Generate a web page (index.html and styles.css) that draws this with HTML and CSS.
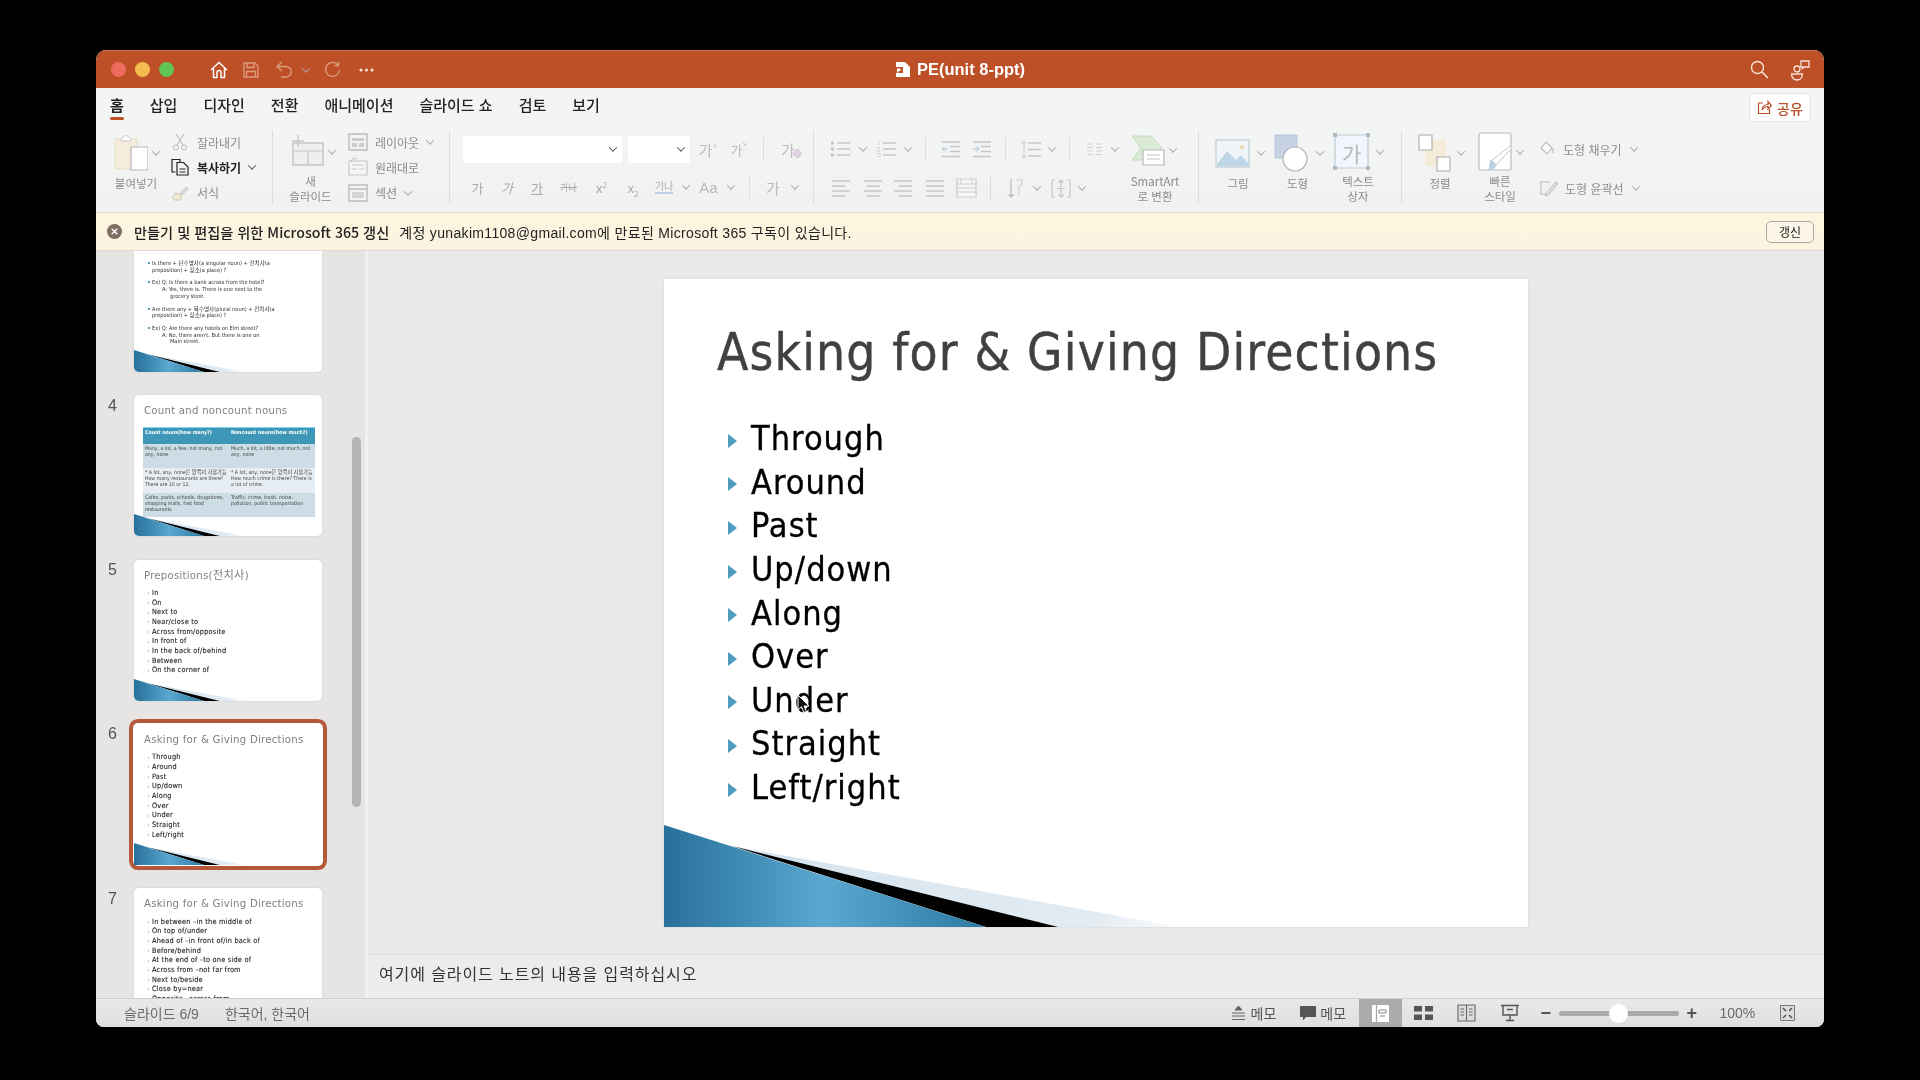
FILE: index.html
```html
<!DOCTYPE html>
<html lang="ko">
<head>
<meta charset="utf-8">
<title>PE(unit 8-ppt)</title>
<link rel="stylesheet" href="styles.css">
</head>
<body>
<div class="window">
  <header class="titlebar">
    <div class="tb-left">
      <span class="light red"></span><span class="light yellow"></span><span class="light green"></span>
      <svg class="qa home" width="20" height="20" viewBox="0 0 20 20"><path d="M2 10 10 2.500 18 10M4.500 8.500V17.500H8V12.500A2 2 0 0 1 12 12.500V17.500H15.500V8.500" fill="none" stroke="#fff" stroke-width="1.500" stroke-linejoin="round"/></svg>
      <svg class="qa save" width="18" height="18" viewBox="0 0 18 18"><path d="M2 2H13L16 5V16H2ZM5 2V6.500H12V2M4.500 16V10.500H13.500V16" fill="none" stroke="#dd9c80" stroke-width="1.300"/></svg>
      <svg class="qa undo" width="20" height="20" viewBox="0 0 20 20"><path d="M8 2 3 6.500 8 11M3 6.500H12A5 5 0 0 1 12 17H7" fill="none" stroke="#dd9c80" stroke-width="1.400"/></svg>
      <i class="chv chv-tb"></i>
      <svg class="qa redo" width="19" height="19" viewBox="0 0 19 19"><path d="M15 5A7 7 0 1 0 16.500 10M15.500 1.500V5.500H11.500" fill="none" stroke="#dd9c80" stroke-width="1.300"/></svg>
      <svg class="more" width="15" height="4" viewBox="0 0 15 4"><circle cx="2" cy="2" r="1.600" fill="#f6e3da"/><circle cx="7.500" cy="2" r="1.600" fill="#f6e3da"/><circle cx="13" cy="2" r="1.600" fill="#f6e3da"/></svg>
    </div>
    <div class="tb-title">
      <svg width="16" height="17" viewBox="0 0 16 17"><path d="M1 1H10L15 6V16H1Z" fill="#fff"/><path d="M0 6H8V12H0Z" fill="#bd5026"/><path d="M2 7.500H5.500V10H3.500V11.500H2Z" fill="#fff"/></svg>
      <span>PE(unit 8-ppt)</span>
    </div>
    <div class="tb-right">
      <svg width="19" height="19" viewBox="0 0 19 19"><circle cx="7.500" cy="7.500" r="6" fill="none" stroke="#f6e3da" stroke-width="1.400"/><path d="M12 12 18 18" stroke="#f6e3da" stroke-width="1.500"/></svg>
      <svg width="21" height="22" viewBox="0 0 21 22"><circle cx="7" cy="10" r="3" fill="none" stroke="#f6e3da" stroke-width="1.300"/><path d="M1.500 15H12.500C12.500 23 1.500 23 1.500 15Z" fill="none" stroke="#f6e3da" stroke-width="1.300"/><path d="M11 2H19V8H14L12.500 9.500V8H11Z" fill="none" stroke="#f6e3da" stroke-width="1.300"/></svg>
    </div>
  </header>

  <nav class="tabs">
    <ul class="tablist">
      <li class="tab active">홈</li><li class="tab">삽입</li><li class="tab">디자인</li><li class="tab">전환</li><li class="tab">애니메이션</li><li class="tab">슬라이드 쇼</li><li class="tab">검토</li><li class="tab">보기</li>
    </ul>
    <button class="share">
      <svg width="15" height="15" viewBox="0 0 15 15"><path d="M6 3H1.500V13.500H12.500V9M5 10C5.500 6 8 4.500 11 4.500V1.500L14.500 5.500 11 9V6.500C8.500 6.500 6.500 7.500 5 10Z" fill="none" stroke="#b9502a" stroke-width="1.200"/></svg>
      <span>공유</span>
    </button>
  </nav>

  <section class="ribbon">
    <div class="grp g-clip">
      <div class="big b-paste">
        <div class="big-ic">
          <svg width="34" height="38" viewBox="0 0 34 38"><path d="M1 5H23V35H1Z" fill="#f3edda" stroke="#e6dfc6"/><path d="M7 5 12 1 17 5V7H7Z" fill="#fff" stroke="#c9c9c9"/><path d="M17 13H34V36H17Z" fill="#fff" stroke="#b7b7b7" stroke-width="1.200"/></svg>
          <i class="chv"></i>
        </div>
        <span class="lbl">붙여넣기</span>
      </div>
      <div class="small">
        <div class="sm-row"><svg width="16" height="18" viewBox="0 0 16 18"><path d="M4 1 11 12M12 1 5 12" stroke="#bbb" stroke-width="1.100"/><circle cx="4" cy="14.500" r="2.500" fill="none" stroke="#bbb"/><circle cx="12" cy="14.500" r="2.500" fill="none" stroke="#bbb"/></svg><span>잘라내기</span></div>
        <div class="sm-row on"><svg width="19" height="18" viewBox="0 0 19 18"><path d="M5 14H1.500V1.500H9.500V4" fill="none" stroke="#222" stroke-width="1.200"/><path d="M6.500 4.500H13L17.500 9V17H6.500Z" fill="none" stroke="#222" stroke-width="1.200"/><path d="M9 11H15M9 14H15" stroke="#222"/></svg><span>복사하기</span><i class="chv dark"></i></div>
        <div class="sm-row"><svg width="18" height="16" viewBox="0 0 18 16"><path d="M9 9 15 2 17 4 10.500 10.500Z" fill="#ddd" stroke="#c4c4c4"/><path d="M4 8 9 9 10.500 10.500 10 15 3 15 1 12C3 12 4 10 4 8Z" fill="#f0ead2" stroke="#cbc8ba"/></svg><span>서식</span></div>
      </div>
    </div>

    <div class="grp g-slide">
      <div class="big b-new">
        <div class="big-ic">
          <svg width="36" height="38" viewBox="0 0 36 38"><path d="M3 10H33V32H3Z" fill="#efefef" stroke="#c6c6c6" stroke-width="1.500"/><path d="M3 18H33M18 18V32" stroke="#c6c6c6" stroke-width="1.200"/><path d="M8 2V14M2 8H14" stroke="#c9c9c9" stroke-width="1.400"/></svg>
          <i class="chv"></i>
        </div>
        <span class="lbl">새<br>슬라이드</span>
      </div>
      <div class="small">
        <div class="sm-row"><svg width="20" height="18" viewBox="0 0 20 18"><path d="M1 1H19V17H1Z" fill="#f2f2f2" stroke="#bcbcbc" stroke-width="1.400"/><path d="M4 5H16V8H4ZM4 10H9V14H4ZM11 10H16V14H11Z" fill="#ccc"/></svg><span>레이아웃</span><i class="chv"></i></div>
        <div class="sm-row"><svg width="20" height="18" viewBox="0 0 20 18"><path d="M1 3H19V17H1Z" fill="#f5f5f5" stroke="#c6c6c6" stroke-width="1.200"/><path d="M4 7H16M4 11H9M11 11H16" stroke="#c6c6c6"/><path d="M3 4A4 4 0 0 1 9 1" fill="none" stroke="#bbb"/></svg><span>원래대로</span></div>
        <div class="sm-row"><svg width="20" height="18" viewBox="0 0 20 18"><path d="M1 1H19V17H1Z" fill="#f4f4f4" stroke="#bcbcbc" stroke-width="1.400"/><path d="M1 5H19" stroke="#bcbcbc" stroke-width="1.400"/><path d="M4 8H16V14H4Z" fill="#d6d6d6"/></svg><span>섹션</span><i class="chv"></i></div>
      </div>
    </div>

    <div class="grp g-font">
      <div class="fr1">
        <div class="box b-fontname"><i class="chv dark"></i></div>
        <div class="box b-fontsize"><i class="chv dark"></i></div>
        <span class="gl big-g">가<sup>^</sup></span>
        <span class="gl mid-g">가<sup>ˇ</sup></span>
        <b class="vd"></b>
        <span class="gl big-g erase">가<svg width="9" height="9" viewBox="0 0 9 9"><path d="M4.500 0 9 4.500 4.500 9 0 4.500Z" fill="#e3d3e6" stroke="#c9b8cc"/></svg></span>
      </div>
      <div class="fr2">
        <span class="gl">가</span><span class="gl it">가</span><span class="gl ul">가</span><span class="gl st">가나</span><span class="gl">x<sup>2</sup></span><span class="gl">x<sub>2</sub></span><span class="gl sp">기나</span><i class="chv"></i><span class="gl aa">Aa</span><i class="chv"></i><b class="vd"></b><span class="gl big-g">가</span><i class="chv"></i>
      </div>
    </div>

    <div class="grp g-para">
      <div class="para-cols">
        <div class="pr1">
          <svg class="ic" width="19" height="18" viewBox="0 0 19 18"><path d="M6 3H19M6 9H19M6 15H19" stroke="#c6c6c6" stroke-width="1.400"/><path d="M0 1.500H3V4.500H0ZM0 7.500H3V10.500H0ZM0 13.500H3V16.500H0Z" fill="#c6c6c6"/></svg><i class="chv"></i>
          <svg class="ic" width="19" height="18" viewBox="0 0 19 18"><path d="M6 3H19M6 9H19M6 15H19" stroke="#c6c6c6" stroke-width="1.400"/><path d="M1 1.500 2 1V5M0 7.500H3L0 11H3M0 13.500H3V17H0" fill="none" stroke="#cfcfcf" stroke-width=".8"/></svg><i class="chv"></i>
          <b class="vd"></b>
          <svg class="ic" width="18" height="17" viewBox="0 0 18 17"><path d="M0 1H18M8 5.500H18M8 10.500H18M0 15.500H18" stroke="#c6c6c6" stroke-width="1.300"/><path d="M6 8H0M3 5.500 .5 8 3 10.500" fill="none" stroke="#a9bfd3"/></svg>
          <svg class="ic" width="18" height="17" viewBox="0 0 18 17"><path d="M0 1H18M8 5.500H18M8 10.500H18M0 15.500H18" stroke="#c6c6c6" stroke-width="1.300"/><path d="M0 8H6M3.500 5.500 6 8 3.500 10.500" fill="none" stroke="#a9bfd3"/></svg>
          <b class="vd"></b>
          <svg class="ic" width="20" height="19" viewBox="0 0 20 19"><path d="M7 3H20M7 9.500H20M7 16H20" stroke="#c6c6c6" stroke-width="1.400"/><path d="M3 1V18M.5 3.500 3 1 5.500 3.500M.5 15.500 3 18 5.500 15.500" fill="none" stroke="#c0c8d0"/></svg><i class="chv"></i>
          <b class="vd"></b>
          <svg class="ic" width="15" height="12" viewBox="0 0 15 12"><path d="M0 1H6M0 4.500H6M0 8H6M0 11.500H6M9 1H15M9 4.500H15M9 8H15M9 11.500H15" stroke="#d2d2d2" stroke-width="1.100"/></svg><i class="chv"></i>
        </div>
        <div class="pr2">
          <svg class="ic" width="18" height="17" viewBox="0 0 18 17"><path d="M0 1H18M0 6H13M0 11H18M0 16H13" stroke="#c6c6c6" stroke-width="1.300"/></svg>
          <svg class="ic" width="18" height="17" viewBox="0 0 18 17"><path d="M0 1H18M2.500 6H15.500M0 11H18M2.500 16H15.500" stroke="#c6c6c6" stroke-width="1.300"/></svg>
          <svg class="ic" width="18" height="17" viewBox="0 0 18 17"><path d="M0 1H18M5 6H18M0 11H18M5 16H18" stroke="#c6c6c6" stroke-width="1.300"/></svg>
          <svg class="ic" width="18" height="17" viewBox="0 0 18 17"><path d="M0 1H18M0 6H18M0 11H18M0 16H18" stroke="#c6c6c6" stroke-width="1.300"/></svg>
          <svg class="ic" width="21" height="20" viewBox="0 0 21 20"><path d="M1 1H20V19H1ZM1 6H20M1 10H20M1 14H20" fill="#f6f6f6" stroke="#cbcbcb" stroke-width="1.200"/><path d="M5 1V6M16 1V6" stroke="#cbcbcb"/></svg>
          <b class="vd"></b>
          <span class="gl td"><svg width="16" height="20" viewBox="0 0 16 20"><path d="M3 1V19M.5 16.500 3 19 5.500 16.500" fill="none" stroke="#b5b5b5" stroke-width="1.100"/><path d="M8 2H14V6L10 10M11 11V18" fill="none" stroke="#cfcfcf" stroke-width="1.100"/></svg></span><i class="chv"></i>
          <svg class="ic" width="20" height="19" viewBox="0 0 20 19"><path d="M4 1H1V18H4M16 1H19V18H16M10 1V18M7.500 3.500 10 1 12.500 3.500M7.500 15.500 10 18 12.500 15.500M6 9.500H14" fill="none" stroke="#c4c4c4" stroke-width="1.100"/></svg><i class="chv"></i>
        </div>
      </div>
      <div class="big b-smart">
        <div class="big-ic">
          <svg width="34" height="31" viewBox="0 0 34 31"><path d="M1 1H20L31 13 20 25H1L10 13Z" fill="#dcebd8" stroke="#c3dac0"/><path d="M12 15H33V30H12Z" fill="#fff" stroke="#b9b9b9" stroke-width="1.200"/><path d="M16 20H29M16 24H29" stroke="#c0c0c0"/></svg>
          <i class="chv"></i>
        </div>
        <span class="lbl">SmartArt<br>로 변환</span>
      </div>
    </div>

    <div class="grp g-insert">
      <div class="big b-pic">
        <div class="big-ic">
          <svg width="35" height="29" viewBox="0 0 35 29"><path d="M1 1H34V28H1Z" fill="#eef4f8" stroke="#c8d4dc" stroke-width="1.500"/><path d="M2 25 12 12 21 21 26 16 33 24V27H2Z" fill="#bfd6e6"/><circle cx="27" cy="8" r="2" fill="#ecd9a8"/></svg>
          <i class="chv"></i>
        </div>
        <span class="lbl">그림</span>
      </div>
      <div class="big b-shape">
        <div class="big-ic">
          <svg width="34" height="38" viewBox="0 0 34 38"><path d="M1 1H23V24H1Z" fill="#c7d2e5" stroke="#bac7dc"/><circle cx="21" cy="25" r="12" fill="#fff" stroke="#b4b4b4" stroke-width="1.200"/></svg>
          <i class="chv"></i>
        </div>
        <span class="lbl">도형</span>
      </div>
      <div class="big b-tbox">
        <div class="big-ic">
          <svg class="tbox-ic" width="37" height="37" viewBox="0 0 37 37"><path d="M2 2H35V35H2Z" fill="#f0f6fb" stroke="#bfcbd3" stroke-width="1.200"/><path d="M0 0H4V4H0ZM33 0H37V4H33ZM0 33H4V37H0ZM33 33H37V37H33Z" fill="#adbcc7"/></svg><span class="tbox-t">가</span>
          <i class="chv"></i>
        </div>
        <span class="lbl">텍스트<br>상자</span>
      </div>
    </div>

    <div class="grp g-draw">
      <div class="big b-arr">
        <div class="big-ic">
          <svg width="33" height="38" viewBox="0 0 33 38"><path d="M7 6H28V32H7Z" fill="#f4ecd8"/><path d="M1 1H14V16H1Z" fill="#fff" stroke="#aaa" stroke-width="1.100"/><path d="M19 23H32V37H19Z" fill="#fff" stroke="#aaa" stroke-width="1.100"/></svg>
          <i class="chv"></i>
        </div>
        <span class="lbl">정렬</span>
      </div>
      <div class="big b-qs">
        <div class="big-ic">
          <svg width="34" height="39" viewBox="0 0 34 39"><path d="M3 1H31A2 2 0 0 1 33 3V36A2 2 0 0 1 31 38H3A2 2 0 0 1 1 36V3A2 2 0 0 1 3 1Z" fill="#fff" stroke="#bababa" stroke-width="1.200"/><path d="M13 29 32 14 34 16 18 33Z" fill="#fff" stroke="#c6c6c6"/><path d="M12 28C17 29 19 32 17 36 14 38 11 38 10 38 12 35 11 32 12 28Z" fill="#bcd0e2"/></svg>
          <i class="chv"></i>
        </div>
        <span class="lbl">빠른<br>스타일</span>
      </div>
      <div class="shape-opts">
        <div class="sm-row"><svg width="16" height="16" viewBox="0 0 16 16"><path d="M6 1 12 7 7 13 1 7Z" fill="#fbfbfb" stroke="#bbb" stroke-width="1.100"/><path d="M13 7V12" stroke="#c6c6c6" stroke-width="1.400"/></svg><span>도형 채우기</span><i class="chv"></i></div>
        <div class="sm-row"><svg width="18" height="16" viewBox="0 0 18 16"><path d="M10 2H1V14H6M6 14 16 2 17.500 3.500 8 15 5.500 15.500Z" fill="none" stroke="#bbb" stroke-width="1.100"/></svg><span>도형 윤곽선</span><i class="chv"></i></div>
      </div>
    </div>
  </section>

  <div class="notice">
    <svg width="15" height="15" viewBox="0 0 15 15"><circle cx="7.500" cy="7.500" r="7.500" fill="#7d6e60"/><path d="M4.700 4.700 10.300 10.300M10.300 4.700 4.700 10.300" stroke="#fff" stroke-width="1.500"/></svg>
    <strong>만들기 및 편집을 위한 Microsoft 365 갱신</strong>
    <span class="n-msg">계정 yunakim1108@gmail.com에 만료된 Microsoft 365 구독이 있습니다.</span>
    <button class="renew">갱신</button>
  </div>

  <div class="content">
    <aside class="sidebar">
      <ol class="thumbs">
        <li class="t-item"><span class="t-num"></span>
          <div class="thumb t3">
            <ul class="t-small">
              <li>Is there + 단수명사(a singular noun) + 전치사(a<br>preposition) + 장소(a place) ?</li>
              <li>Ex) Q: Is there a bank across from the hotel?<br><span class="ind">A: Yes, there is. There is one next to the<br><span class="ind2">grocery store.</span></span></li>
              <li>Are there any + 복수명사(plural noun) + 전치사(a<br>preposition) + 장소(a place) ?</li>
              <li>Ex) Q: Are there any hotels on Elm street?<br><span class="ind">A: No, there aren't. But there is one on<br><span class="ind2">Main street.</span></span></li>
            </ul>
            <svg class="wedge" viewBox="0 0 864 102" preserveAspectRatio="none"><use href="#wedge-art"/></svg>
          </div>
        </li>
        <li class="t-item"><span class="t-num">4</span>
          <div class="thumb">
            <h4 class="t-title">Count and noncount nouns</h4>
            <table class="t-table">
              <tr class="th"><td>Count nouns(how many?)</td><td>Noncount nouns(how much?)</td></tr>
              <tr class="r1"><td>Many, a lot, a few, not many, not any, none</td><td>Much, a lot, a little, not much, not any, none</td></tr>
              <tr class="r2"><td>* A lot, any, none은 양쪽이 사용가능<br>How many restaurants are there? There are 10 or 12.</td><td>* A lot, any, none은 양쪽이 사용가능<br>How much crime is there? There is a lot of crime.</td></tr>
              <tr class="r1"><td>Cafes, parks, schools, drugstores, shopping malls, fast food restaurants</td><td>Traffic, crime, trash, noise, pollution, public transportation</td></tr>
            </table>
            <svg class="wedge" viewBox="0 0 864 102" preserveAspectRatio="none"><use href="#wedge-art"/></svg>
          </div>
        </li>
        <li class="t-item"><span class="t-num">5</span>
          <div class="thumb">
            <h4 class="t-title">Prepositions(전치사)</h4>
            <ul class="bul t-list"><li>In</li><li>On</li><li>Next to</li><li>Near/close to</li><li>Across from/opposite</li><li>In front of</li><li>In the back of/behind</li><li>Between</li><li>On the corner of</li></ul>
            <svg class="wedge" viewBox="0 0 864 102" preserveAspectRatio="none"><use href="#wedge-art"/></svg>
          </div>
        </li>
        <li class="t-item"><span class="t-num">6</span>
          <div class="thumb sel">
            <h4 class="t-title">Asking for &amp; Giving Directions</h4>
            <ul class="bul t-list"><li>Through</li><li>Around</li><li>Past</li><li>Up/down</li><li>Along</li><li>Over</li><li>Under</li><li>Straight</li><li>Left/right</li></ul>
            <svg class="wedge" viewBox="0 0 864 102" preserveAspectRatio="none"><use href="#wedge-art"/></svg>
          </div>
        </li>
        <li class="t-item"><span class="t-num">7</span>
          <div class="thumb">
            <h4 class="t-title">Asking for &amp; Giving Directions</h4>
            <ul class="bul t-list"><li>In between –in the middle of</li><li>On top of/under</li><li>Ahead of –in front of/in back of</li><li>Before/behind</li><li>At the end of –to one side of</li><li>Across from –not far from</li><li>Next to/beside</li><li>Close by=near</li><li>Opposite –across from</li></ul>
          </div>
        </li>
      </ol>
      <div class="scrollthumb"></div>
    </aside>

    <main class="main">
      <div class="stage">
        <article class="slide">
          <h1 class="s-title">Asking for &amp; Giving Directions</h1>
          <ul class="bul s-list"><li>Through</li><li>Around</li><li>Past</li><li>Up/down</li><li>Along</li><li>Over</li><li>Under</li><li>Straight</li><li>Left/right</li></ul>
          <svg class="wedge" viewBox="0 0 864 102" preserveAspectRatio="none">
            <defs>
              <linearGradient id="wb" x1="0" y1="0" x2="1" y2="0"><stop offset="0" stop-color="#27709a"/><stop offset=".5" stop-color="#5aa8d0"/><stop offset="1" stop-color="#2c7aa2"/></linearGradient>
              <linearGradient id="wl" x1="0" y1="0" x2="1" y2="0"><stop offset="0" stop-color="#d6e4ee"/><stop offset=".8" stop-color="#e2ebf2"/><stop offset="1" stop-color="#fafbfc"/></linearGradient>
              <g id="wedge-art"><path d="M68 21 515 102H322Z" fill="url(#wl)"/><path d="M68 21 394 102H322Z" fill="#000"/><path d="M0 0 322 102H0Z" fill="url(#wb)"/></g>
            </defs>
            <use href="#wedge-art"/>
          </svg>
          <svg class="cursor" width="13" height="20" viewBox="0 0 13 20"><path d="M1 1V16L4.500 12.800 7 18.500 9.500 17.500 7 12H12Z" fill="#111" stroke="#fff" stroke-width="1"/></svg>
        </article>
      </div>
      <div class="notes">여기에 슬라이드 노트의 내용을 입력하십시오</div>
    </main>
  </div>

  <footer class="status">
    <div class="st-left"><span>슬라이드 6/9</span><span>한국어, 한국어</span></div>
    <div class="st-right">
      <span class="st-memo m1"><svg width="13" height="15" viewBox="0 0 13 15"><path d="M6.500 0 10 4H3ZM0 7H13M0 10H13M0 13.500H13" fill="#666" stroke="#666" stroke-width="1"/></svg>메모</span>
      <span class="st-memo m2"><svg width="16" height="15" viewBox="0 0 16 15"><path d="M0 0H16V11H6L3 14.500V11H0Z" fill="#555"/></svg>메모</span>
      <span class="vw on"><svg width="19" height="19" viewBox="0 0 19 19"><path d="M1 1H18V18H1Z" fill="#fff"/><path d="M5.500 1V18" stroke="#aaa" stroke-width="1.300"/><path d="M8 6H15V9H8ZM9 12H14" fill="none" stroke="#888"/></svg></span>
      <span class="vw"><svg width="19" height="16" viewBox="0 0 19 16"><path d="M0 1H8V6.500H0ZM11 1H19V6.500H11ZM0 9.500H8V15H0ZM11 9.500H19V15H11Z" fill="#555"/></svg></span>
      <span class="vw"><svg width="19" height="18" viewBox="0 0 19 18"><path d="M1 1H18V17H1ZM9.500 1V17M3.500 5H7M3.500 8H7M3.500 11H7M12 5H15.500M12 8H15.500M12 11H15.500" fill="#ddd" stroke="#666" stroke-width="1.100"/></svg></span>
      <span class="vw"><svg width="18" height="18" viewBox="0 0 18 18"><path d="M0 1.500H18M2 1.500H16V11H2ZM9 11V16M5 16.500H13M6 5.500H12" fill="none" stroke="#555" stroke-width="1.400"/></svg></span>
      <span class="zm-btn">−</span>
      <span class="slider"><i class="knob"></i></span>
      <span class="zm-btn plus">+</span>
      <span class="zoomv">100%</span>
      <svg class="fit" width="15" height="16" viewBox="0 0 15 16"><path d="M.5.500H14.500V15.500H.5Z" fill="#ddd" stroke="#777"/><path d="M3 3 6 6M12 3 9 6M3 13 6 10M12 13 9 10" stroke="#555" stroke-width="1.500"/></svg>
    </div>
  </footer>
</div>
</body>
</html>
```

FILE: styles.css
```css
* { box-sizing: border-box; }
html, body { margin: 0; height: 100%; }
body {
  background: #000;
  padding: 50px 96px 53px 96px;
  font-family: "Liberation Sans", "Noto Sans CJK KR", sans-serif;
  overflow: hidden;
}
ul, ol { list-style: none; margin: 0; padding: 0; }
button { font: inherit; }

.window {
  width: 1728px;
  height: 977px;
  display: flex;
  flex-direction: column;
  border-radius: 10px 10px 8px 8px;
  overflow: hidden;
  background: #f2f3f3;
  filter: blur(.4px);
}

/* Title bar */
.titlebar {
  height: 38px;
  flex: none;
  background: #bd5026;
  display: grid;
  grid-template-columns: 1fr auto 1fr;
  align-items: center;
  border-top: 1px solid #cf7450;
}
.tb-left { display: flex; align-items: center; padding-left: 15px; }
.light { width: 15px; height: 15px; border-radius: 50%; margin-right: 9px; }
.red { background: #ee6a5f; }
.yellow { background: #f5bd4f; }
.green { background: #61c454; margin-right: 0; }
.qa.home { margin-left: 35px; }
.qa.save { margin-left: 13px; }
.qa.undo { margin-left: 14px; }
.chv-tb { margin-left: 9px; border-color: #dd9c80; }
.qa.redo { margin-left: 14px; }
.more { margin-left: 17px; }
.tb-title { display: flex; align-items: center; gap: 6px; color: #fff; font-size: 16.500px; font-weight: 700; }
.tb-right { display: flex; justify-content: flex-end; align-items: center; gap: 21px; padding-right: 13px; }

/* Tabs */
.tabs {
  height: 40px;
  flex: none;
  display: flex;
  justify-content: space-between;
  align-items: center;
  padding: 0 13px 0 14px;
  background: #f3f4f4;
  font-family: "Noto Sans CJK KR", sans-serif;
}
.tablist { display: flex; gap: 26px; margin-top: -6px; }
.tab { font-size: 15px; line-height: 22px; color: #222; position: relative; font-weight: 500; }
.tab.active { font-weight: 700; }
.tab.active::after { content: ""; position: absolute; left: 0; right: 0; bottom: -4px; height: 3px; background: #bd5026; border-radius: 2px; }
.share {
  width: 62px; height: 29px;
  display: flex; align-items: center; justify-content: center; gap: 5px;
  background: #fff;
  border: 1px solid #e4e4e4;
  border-radius: 3px;
  color: #b9502a;
  font-size: 14px;
  font-weight: 500;
  padding: 0;
  margin-top: -1px;
}

/* Ribbon */
.ribbon {
  height: 85px;
  flex: none;
  display: flex;
  padding-top: 2px;
  background: linear-gradient(#f3f4f4, #f1f1f1);
  border-bottom: 1px solid #ddd8cf;
  font-family: "Noto Sans CJK KR", sans-serif;
  font-size: 12px;
  color: #8b8b8b;
}
.grp { height: 74px; display: flex; border-right: 1px solid #dddddd; flex: none; }
.g-clip { width: 177px; padding-left: 14px; }
.g-slide { width: 177px; padding-left: 10px; }
.g-font { width: 364px; padding-left: 13px; display: block; padding-top: 5px; }
.g-para { width: 385px; padding-left: 14px; padding-top: 5px; }
.g-insert { width: 203px; padding-left: 16px; }
.g-draw { border-right: 0; padding-left: 15.500px; }

.big { display: flex; flex-direction: column; align-items: center; flex: none; }
.big-ic { height: 46px; display: flex; align-items: center; gap: 5px; position: relative; }
.lbl { text-align: center; line-height: 15px; font-size: 11.500px; }
.chv {
  display: inline-block; flex: none;
  width: 6px; height: 6px;
  border-right: 1.500px solid #a8a8a8;
  border-bottom: 1.500px solid #a8a8a8;
  transform: rotate(45deg) translate(-1px, -1px);
}
.chv.dark { border-color: #555; }

.b-paste { width: 52px; margin-right: 8px; }
.b-new { width: 58px; margin-right: 7px; }
.b-new .big-ic { gap: 3px; }
.b-new .lbl { margin-left: -3px; margin-top: 1px; }
.small { display: flex; flex-direction: column; gap: 3px; padding-top: 1px; }
.sm-row { height: 24px; display: flex; align-items: center; gap: 7px; white-space: nowrap; }
.sm-row svg { flex: none; }
.sm-row .chv { margin-left: .5px; }
.sm-row.on { color: #222; font-weight: 700; }
.g-clip .sm-row svg { width: 20px; }

/* Font group */
.fr1 { display: grid; grid-template-columns: 159px 68px 36px 26px 22px 28px; align-items: center; height: 28px; justify-items: center; }
.box { background: #fff; height: 27px; border-radius: 2px; display: flex; align-items: center; justify-content: flex-end; padding-right: 6px; justify-self: stretch; }
.b-fontsize { margin-left: 6px; }
.fr2 { display: grid; grid-template-columns: 29px 30px 30px 33px 33px 30px 32px 12px 33px 12px 24px 24px 20px; align-items: center; height: 28px; margin-top: 10px; justify-items: center; }
.gl { font-size: 13px; color: #ababab; line-height: 1; white-space: nowrap; }
.gl sup, .gl sub { font-size: 8px; line-height: 0; }
.big-g { font-size: 15px; color: #bcbcbc; }
.mid-g { font-size: 13px; color: #bcbcbc; }
.erase { position: relative; }
.erase svg { position: absolute; right: -7px; bottom: -1px; }
.it { font-style: italic; }
.ul { text-decoration: underline; }
.st { text-decoration: line-through; font-size: 9px; }
.sp { font-size: 10px; border-bottom: 2px solid #bcd0e6; padding-bottom: 1px; }
.aa { font-size: 15px; color: #b8b8b8; font-family: "Liberation Sans", sans-serif; }
.vd { display: block; width: 1px; height: 24px; background: #dcdcdc; }
.tbox-ic { display: block; }
.tbox-t { position: absolute; left: 9px; top: 9px; font-size: 21px; line-height: 28px; color: #b8b8b8; }

/* Paragraph group */
.para-cols { width: 295px; flex: none; }
.pr1 { display: grid; grid-template-columns: 25px 20px 27px 16px 18px 33px 29px 18px 34px 8px 26px 25px 16px; height: 28px; align-items: center; justify-items: center; }
.pr2 { display: grid; grid-template-columns: 26px 37px 24px 39px 25px 22px 29px 14px 33px 10px; height: 28px; margin-top: 11px; align-items: center; justify-items: center; }
.pr1 svg, .pr2 svg { display: block; }
.b-smart { margin-left: 3px; width: 60px; margin-top: -5px; }
.b-smart .big-ic { align-self: flex-start; margin-left: 5px; }
.b-smart .lbl { margin-left: -2px; margin-top: 4px; white-space: nowrap; }

/* Insert group */
.b-pic { width: 47px; margin-right: 12px; align-items: flex-start; }
.b-pic .big-ic { gap: 8px; }
.b-pic .lbl { width: 35px; margin-left: 5.500px; }
.b-shape { width: 50px; margin-right: 9px; align-items: flex-start; }
.b-shape .big-ic { gap: 9px; }
.b-shape .lbl { width: 50px; margin-left: -1.500px; }
.b-tbox { width: 50px; align-items: flex-start; }
.b-tbox .big-ic { gap: 7px; }
.b-tbox .lbl { width: 50px; margin-top: 1px; }

/* Drawing group */
.b-arr { width: 50px; margin-right: 10.500px; align-items: flex-start; }
.b-arr .big-ic { gap: 7px; }
.b-arr .lbl { width: 33px; margin-left: 6px; }
.b-qs { width: 52px; margin-right: 10px; align-items: flex-start; }
.b-qs .lbl { width: 40px; margin-left: 2px; margin-top: 1px; }
.shape-opts { display: flex; flex-direction: column; gap: 11px; padding-top: 5px; }
.shape-opts .sm-row { height: 28px; gap: 7px; }
.shape-opts .sm-row .chv { margin-left: 2px; }

/* Notice */
.notice {
  height: 38px;
  flex: none;
  display: flex;
  align-items: center;
  padding: 0 10px 0 11px;
  background: linear-gradient(#fdf6df, #fbf3e0);
  border-bottom: 1px solid #dedad0;
  font-size: 14px;
  color: #222;
}
.notice strong { margin-left: 12px; font-family: "Noto Sans CJK KR", sans-serif; font-size: 14.200px; font-weight: 500; }
.n-msg { margin-left: 10px; letter-spacing: .33px; }
.renew {
  margin-left: auto;
  width: 48px; height: 22px;
  padding: 0;
  background: #fbf6e7;
  border: 1px solid #a9a59a;
  border-radius: 5px;
  font-size: 12px;
  color: #222;
  font-family: "Noto Sans CJK KR", sans-serif;
}

/* Content */
.content { flex: 1; min-height: 0; display: flex; }
.sidebar {
  width: 272px;
  flex: none;
  position: relative;
  overflow: hidden;
  background: #e7e4e4;
  border-right: 3px solid #f1f1f1;
}
.thumbs { margin-top: -20px; }
.t-item { display: flex; margin-bottom: 23.300px; }
.t-num { width: 38px; padding: .5px 0 0 12px; font-size: 16px; line-height: 20px; color: #555; flex: none; }
.thumb {
  width: 188px; height: 141px;
  flex: none;
  background: #fff;
  border-radius: 5px;
  position: relative;
  overflow: hidden;
  padding-top: 8px;
  box-shadow: 0 0 2px rgba(0,0,0,.12);
  font-family: "DejaVu Sans", "Noto Sans CJK KR", sans-serif;
  font-stretch: condensed;
}
.thumb.sel { overflow: visible; box-shadow: 0 0 0 1px #fff, 0 0 0 5px #b5583a; border-radius: 4px; }
.t-title { margin: 0 0 0 10px; font-size: 11.300px; line-height: 16px; font-weight: 400; color: #808080; white-space: nowrap; letter-spacing: .24px; }
.t3 { padding-top: 29px; }
.t-small { margin-left: 14px; font-size: 5.600px; line-height: 6.700px; color: #333; width: 168px; }
.t-small li { margin-bottom: 6px; padding-left: 4px; position: relative; white-space: nowrap; }
.t-small li::before { content: ""; position: absolute; left: 0; top: 2px; width: 1.500px; height: 2px; background: #4f9cbf; }
.ind { padding-left: 10px; }
.ind2 { padding-left: 18px; }
.t-table { margin: 8px 0 0 9px; width: 172px; border-collapse: collapse; font-size: 5.200px; line-height: 6px; color: #444; table-layout: fixed; }
.t-table td { padding: 1px 2px; vertical-align: top; }
.th { background: #3f97b8; color: #fff; height: 16px; font-weight: 700; border-top: 1px solid #7fd4ee; }
.r1 { background: #cddde6; height: 24px; }
.r2 { background: #e6eef3; height: 25px; }
.scrollthumb { position: absolute; left: 256px; top: 186px; width: 9px; height: 370px; background: #b6b4b4; border-radius: 5px; }

.bul { letter-spacing: .03em; }
.bul li { display: flex; align-items: center; }
.bul li::before {
  content: "";
  flex: none;
  width: 0; height: 0;
  margin-right: .41em;
  border-left: .265em solid #4f9cbf;
  border-top: .235em solid transparent;
  border-bottom: .235em solid transparent;
  position: relative;
  top: .05em;
}
.t-list { margin: 4.500px 0 0 14px; font-size: 7.300px; line-height: 9.650px; color: #222; white-space: nowrap; -webkit-text-stroke: .1px #222; }

.wedge { position: absolute; left: 0; bottom: 0; width: 100%; height: 22px; display: block; }
.slide > .wedge { height: 102px; }

/* Main */
.main { flex: 1; min-width: 0; display: flex; flex-direction: column; background: #e9e9e9; }
.stage { flex: 1; display: flex; align-items: center; justify-content: center; min-height: 0; }
.slide {
  width: 864px; height: 648px;
  flex: none;
  background: #fff;
  position: relative;
  box-shadow: 0 0 3px rgba(0,0,0,.08);
  font-family: "DejaVu Sans", sans-serif;
  font-stretch: condensed;
  padding-top: 40px;
}
.s-title { margin: 0 0 0 53px; font-size: 51px; line-height: 68px; font-weight: 400; color: #414141; white-space: nowrap; letter-spacing: 1.130px; -webkit-text-stroke: .4px #414141; }
.s-list { margin: 30.800px 0 0 64px; font-size: 34px; line-height: 43.600px; color: #000; -webkit-text-stroke: .3px #000; }
.cursor { position: absolute; left: 133px; top: 415px; }
.notes {
  height: 44px;
  flex: none;
  display: flex;
  align-items: center;
  padding: 0 0 7px 11px;
  background: #ececec;
  border-top: 1px solid #dcdcdc;
  font-family: "Noto Sans CJK KR", sans-serif;
  font-size: 16px;
  letter-spacing: .9px;
  color: #333;
}

/* Status bar */
.status {
  height: 29px;
  flex: none;
  display: flex;
  justify-content: space-between;
  background: linear-gradient(#e9e9e9, #dfdfdf);
  border-top: 1px solid #cfcfcf;
  font-size: 14px;
  color: #6a6a6a;
}
.st-left { display: flex; align-items: center; gap: 26px; padding-left: 28px; }
.st-right { display: flex; align-items: center; height: 100%; }
.st-memo { display: flex; align-items: center; gap: 6px; font-size: 14px; color: #555; }
.st-memo.m2 { margin-left: 24px; gap: 4px; }
.vw { width: 43px; height: 100%; display: flex; align-items: center; justify-content: center; }
.vw.on { background: #ababab; margin-left: 13px; }
.zm-btn { font-size: 18px; font-weight: 700; color: #555; line-height: 1; }
.vw + .zm-btn { margin-left: 9.400px; }
.zm-btn.plus { margin-left: 7.300px; }
.slider { width: 120.500px; height: 5px; margin-left: 7.700px; background: #aaa; border-radius: 3px; position: relative; }
.knob { position: absolute; left: 50px; top: -7px; width: 19px; height: 19px; border-radius: 50%; background: #fff; }
.zoomv { margin-left: 22.500px; width: 38px; font-size: 14px; }
.fit { margin: 0 29px 0 22.500px; }
```
